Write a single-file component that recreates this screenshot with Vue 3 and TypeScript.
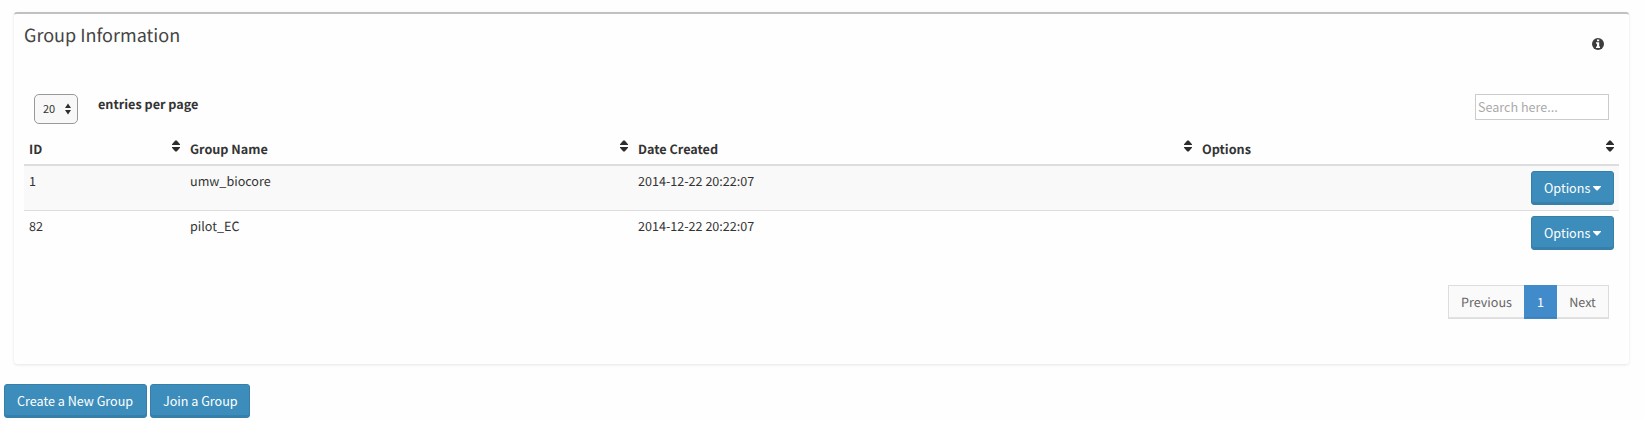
<script setup lang="ts">
import { ref } from 'vue'

interface Group {
  id: number
  name: string
  created: string
}

const columns: string[] = ['ID', 'Group Name', 'Date Created', 'Options']
const groups: Group[] = [
  { id: 1, name: 'umw_biocore', created: '2014-12-22 20:22:07' },
  { id: 82, name: 'pilot_EC', created: '2014-12-22 20:22:07' },
]
const search = ref('')
</script>

<template>
  <main class="page">
    <section class="box">
      <header class="box-header">
        <h3 class="title">Group Information</h3>
        <svg class="info" viewBox="0 0 12 12" aria-label="Info">
          <circle cx="6" cy="6" r="6" fill="#3d3d3d" />
          <path d="M5 1.500h2.200v1.800H5zM4 4.300h3.200v4.200H8V10H4V8.500h1V5.700H4z" fill="#fff" />
        </svg>
      </header>

      <div class="toolbar">
        <button class="select" type="button">
          <span class="select-value">20</span>
          <svg class="select-arrows" viewBox="0 0 6 12"><path d="M0 5 3 .5 6 5zM0 6.900h6L3 11.400z" fill="#2d2d2d" /></svg>
        </button>
        <span class="per-page">entries per page</span>
        <input v-model="search" class="search" type="text" placeholder="Search here..." />
      </div>

      <div class="table">
        <div class="row head">
          <div v-for="column in columns" :key="column" class="cell">
            <span>{{ column }}</span>
            <svg class="sort" viewBox="0 0 8 12"><path d="M0 5V4.300L3.300.5h1.400L8 4.300V5zM0 7h8v.7L4.700 11.500H3.300L0 7.700z" fill="#2d2d2d" /></svg>
          </div>
        </div>
        <div v-for="group in groups" :key="group.id" class="row body">
          <div class="cell">{{ group.id }}</div>
          <div class="cell">{{ group.name }}</div>
          <div class="cell">{{ group.created }}</div>
          <div class="cell actions">
            <button class="btn" type="button">
              Options
              <svg class="caret" viewBox="0 0 8 5"><path d="M0 0h8v.7L4.500 4.600h-1L0 .7z" fill="#fff" /></svg>
            </button>
          </div>
        </div>
      </div>

      <nav class="pagination">
        <a class="prev">Previous</a>
        <a class="current">1</a>
        <a class="next">Next</a>
      </nav>
    </section>

    <div class="footer">
      <button class="btn create" type="button">Create a New Group</button>
      <button class="btn join" type="button">Join a Group</button>
    </div>
  </main>
</template>

<style>
body {
  background: #fefefe;
  overflow: hidden;
}
</style>

<style scoped>
.page,
.page * {
  box-sizing: border-box;
}
.page {
  height: 421px;
  padding: 12px 16px 0 13.5px;
  font-family: "Noto Sans CJK SC", "Noto Sans", sans-serif;
  font-size: 12.58px;
  line-height: 20px;
  color: #333;
  text-rendering: geometricPrecision;
}
button,
input {
  font: inherit;
  margin: 0;
}
.box {
  height: 352px;
  border-top: 2px solid #c1c1c1;
  border-radius: 3px;
  background: #fefefe;
  box-shadow: 0 1px 3px rgba(0, 0, 0, 0.1);
  padding: 0 10px 0 10.5px;
}
.box-header {
  height: 80px;
  display: flex;
  justify-content: space-between;
}
.title {
  margin: 10px 0 0;
  font-size: 18px;
  font-weight: 400;
  line-height: 22px;
  color: #444;
}
.info {
  width: 12px;
  height: 12px;
  margin: 24px 15px 0 0;
}
.toolbar {
  display: flex;
  align-items: flex-start;
  height: 40px;
  padding: 0 10px;
}
.select {
  width: 44px;
  height: 30px;
  padding: 0 6px 0 8px;
  display: flex;
  align-items: center;
  justify-content: space-between;
  border: 1px solid #999;
  border-radius: 5px;
  background: #f8f8f8;
  color: #333;
  font-size: 11px;
}
.select-value {
  padding-bottom: 2px;
}
.select-arrows {
  width: 6px;
  height: 12px;
}
.per-page {
  margin-left: 20px;
  font-size: 12.64px;
  font-weight: 700;
}
.search {
  width: 134px;
  height: 26px;
  margin-left: auto;
  padding: 0 2px 2px;
  border: 1px solid #ccc;
  background: #fff;
  outline: none;
}
.search::placeholder {
  color: #aaa;
  opacity: 1;
}
.row {
  display: grid;
  grid-template-columns: 161px 448px 564px 1fr;
}
.cell {
  padding: 5px;
}
.head {
  height: 32px;
  border-bottom: 2px solid #ddd;
  font-size: 12.64px;
  font-weight: 700;
}
.head .cell {
  display: flex;
  justify-content: space-between;
}
.sort {
  width: 8px;
  height: 12px;
  margin-top: 1px;
}
.body {
  height: 45px;
}
.body:nth-child(2) {
  background: #f9f9f9;
  border-bottom: 1px solid #ddd;
}
.actions {
  display: flex;
  justify-content: flex-end;
}
.btn {
  height: 34px;
  padding: 0 12px;
  display: flex;
  align-items: center;
  white-space: nowrap;
  border: 1px solid #367fa9;
  border-radius: 3px;
  background: #3c8dbc;
  box-shadow: inset 0 -2px 0 rgba(0, 0, 0, 0.09);
  color: #fff;
}
.actions .btn {
  width: 83px;
}
.caret {
  width: 8px;
  height: 5px;
  margin-left: 3px;
  flex: none;
}
.pagination {
  display: flex;
  justify-content: flex-end;
  margin: 29px 10px 0 0;
}
.pagination a {
  height: 34px;
  padding: 6px 0;
  text-align: center;
  border: 1px solid #ddd;
  background: #fafafa;
  box-shadow: inset 0 -1px 0 rgba(0, 0, 0, 0.09);
  color: #666;
}
.pagination .prev {
  width: 76px;
  border-right: 0;
}
.pagination .current {
  width: 33px;
  border-color: #428bca;
  background: #428bca;
  color: #fff;
}
.pagination .next {
  width: 52px;
  border-left: 0;
}
.footer {
  display: flex;
  gap: 3px;
  margin: 20px 0 0 -9.5px;
}
.create {
  width: 143px;
}
.join {
  width: 100px;
}
</style>
